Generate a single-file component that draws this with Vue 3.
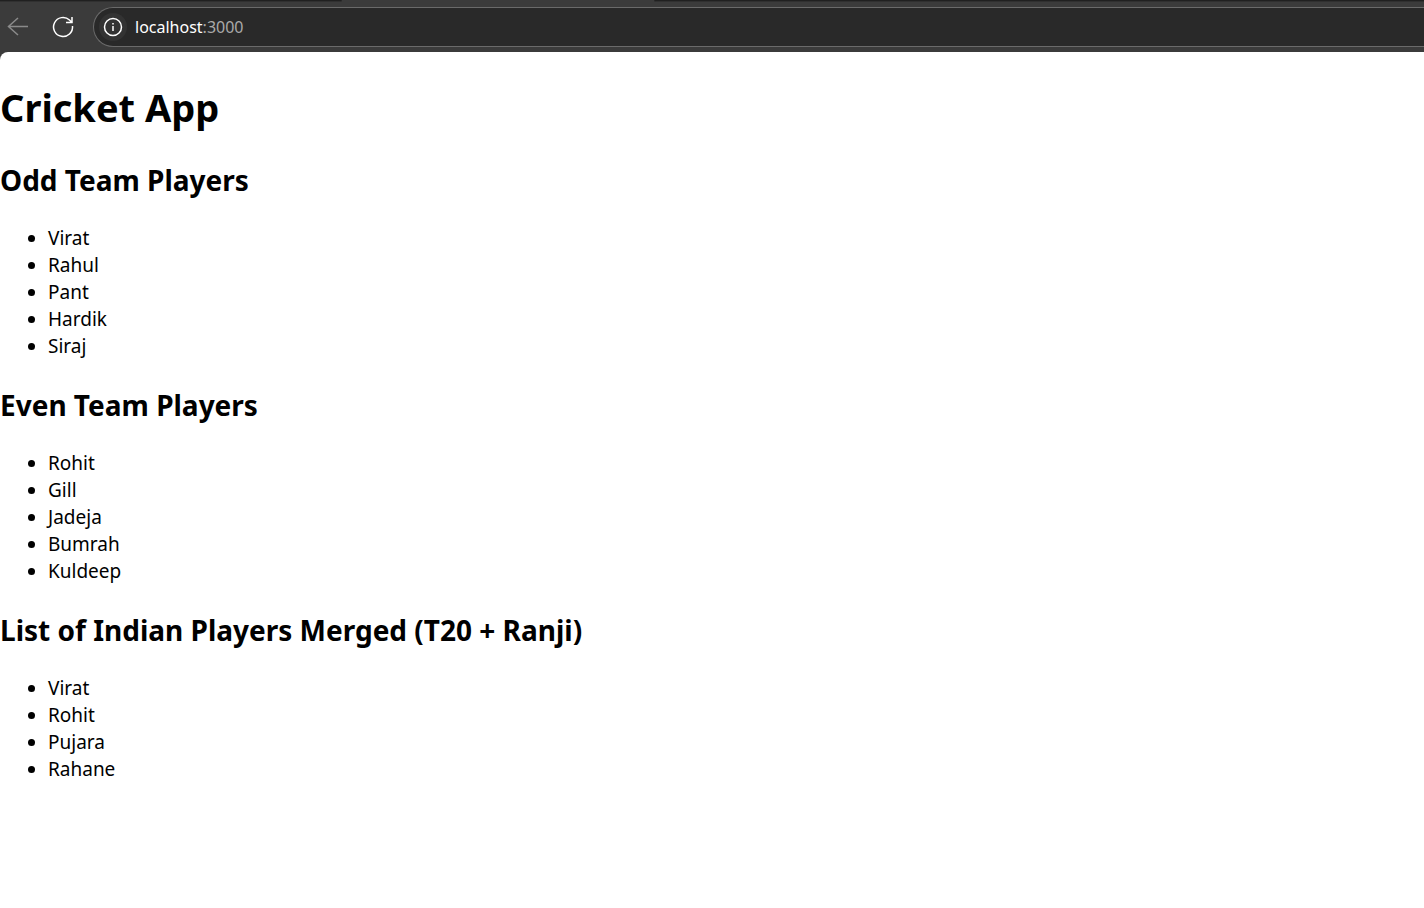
<script setup>
const teams = [
  { title: 'Odd Team Players', players: ['Virat', 'Rahul', 'Pant', 'Hardik', 'Siraj'] },
  { title: 'Even Team Players', players: ['Rohit', 'Gill', 'Jadeja', 'Bumrah', 'Kuldeep'] },
  { title: 'List of Indian Players Merged (T20 + Ranji)', players: ['Virat', 'Rohit', 'Pujara', 'Rahane'] },
]
</script>

<template>
  <div class="window">
    <div class="tabs"><i class="before"></i><i class="after"></i></div>
    <header class="toolbar">
      <button class="nav back" aria-label="Back" disabled>
        <svg width="22" height="22" viewBox="0 0 22 22"><path d="M21 10.500H1.500M11 2L1.500 10.500L11 19" /></svg>
      </button>
      <button class="nav" aria-label="Reload">
        <svg width="24" height="24" viewBox="0 0 24 24"><path d="M21.500 11A9.500 9.500 0 1 1 18.500 5L20.500 7M21 2v5.500h-6" /></svg>
      </button>
      <div class="address">
        <button class="info" aria-label="Site information">
          <svg width="20" height="20" viewBox="0 0 20 20"><circle cx="10" cy="10" r="8.500" /><path d="M10 9v5M10 6v1.500" /></svg>
        </button>
        <a class="url" href="#">localhost<span>:3000</span></a>
      </div>
    </header>
    <main class="page">
      <h1>Cricket App</h1>
      <section v-for="team in teams" :key="team.title">
        <h2>{{ team.title }}</h2>
        <ul>
          <li v-for="player in team.players" :key="player">{{ player }}</li>
        </ul>
      </section>
    </main>
  </div>
</template>

<style>
body { background: #fff; }
</style>

<style scoped>
.window { font-family: "Segoe UI", "Noto Sans", "Open Sans", sans-serif; background: #3b3b3b; min-height: 100vh; display: flex; flex-direction: column; }
.tabs { height: 2px; display: flex; gap: 312px; }
.tabs i { background: #202020; border-bottom: 1px solid #303030; box-sizing: border-box; }
.before { width: 342px; border-bottom-right-radius: 2px; }
.after { flex: 1; border-bottom-left-radius: 2px; }
.toolbar { height: 50px; display: flex; align-items: center; }
.nav { border: 0; background: none; padding: 0; width: 36px; height: 36px; display: grid; place-items: center; margin-right: 9px; }
svg { display: block; fill: none; stroke: #fff; stroke-width: 1.5; }
.back svg { stroke: #8a8a8a; }
.address { flex: 1; height: 40px; box-sizing: border-box; border: 1px solid #6a6a6a; border-right: 0; border-radius: 20px 0 0 20px; background: #292929; display: flex; align-items: center; margin-left: 3px; padding-left: 5px; gap: 8px; }
.info { border: 0; border-radius: 50%; background: #333; padding: 0; width: 28px; height: 28px; display: grid; place-items: center; }
.url { color: #fff; font-size: 16px; line-height: 24px; text-decoration: none; }
.url span { color: #aaa; }
.page { flex: 1; background: #fff; border-top-left-radius: 8px; color: #000; font-size: 19px; line-height: 27px; overflow: hidden; }
h1 { font-size: 38px; line-height: 54px; margin: 28px 0 26px; }
h2 { font-size: 28px; line-height: 40px; margin: 0 0 25px; }
ul { margin: 0 0 25px; padding-left: 48px; }
</style>
